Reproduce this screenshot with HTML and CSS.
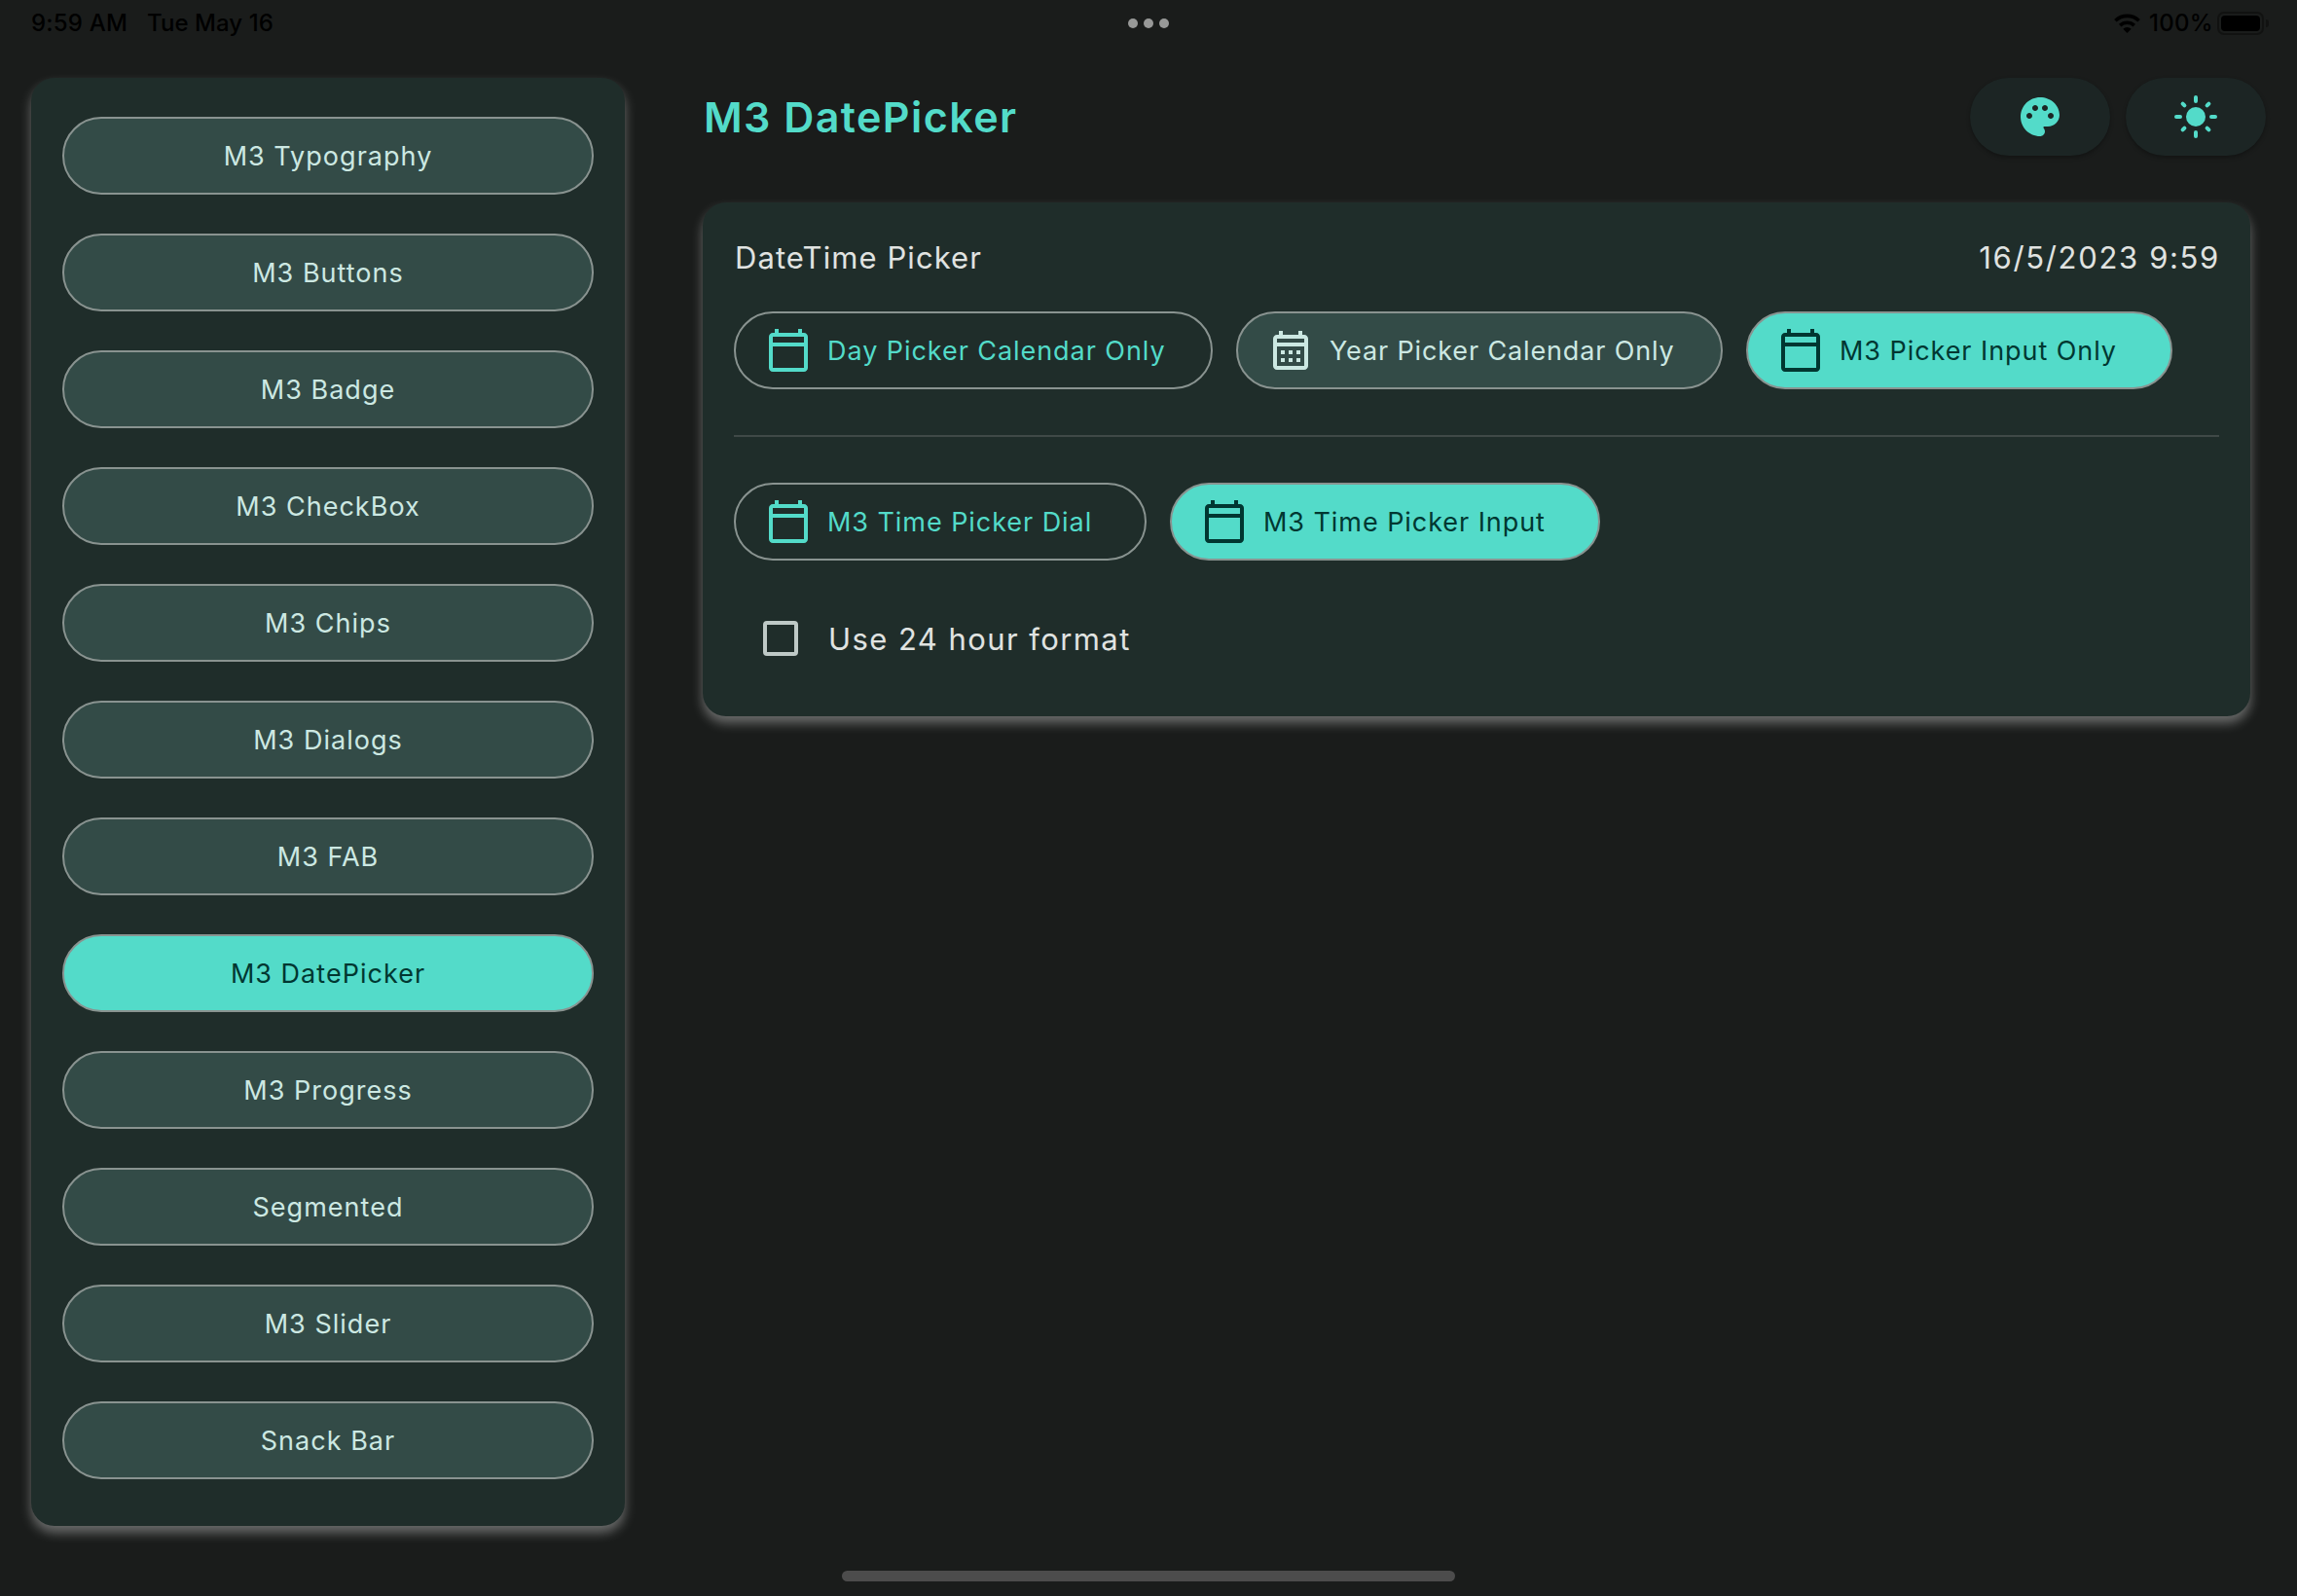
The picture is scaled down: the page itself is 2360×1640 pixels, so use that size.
FILE: index.html
```html
<!DOCTYPE html>
<html lang="en">
<head>
<meta charset="utf-8">
<title>M3 DatePicker</title>
<link rel="stylesheet" href="styles.css">
</head>
<body>
<svg class="defs" aria-hidden="true">
  <symbol id="calendar" viewBox="0 0 24 24"><path d="M20 3h-1V1h-2v2H7V1H5v2H4c-1.1 0-2 .9-2 2v16c0 1.1.9 2 2 2h16c1.1 0 2-.9 2-2V5c0-1.1-.9-2-2-2zm0 18H4V10h16v11zm0-13H4V5h16v3z"/></symbol>
  <symbol id="calendar-month" viewBox="0 0 24 24"><path d="M19 4h-1V2h-2v2H8V2H6v2H5c-1.11 0-1.99.9-1.99 2L3 20c0 1.1.89 2 2 2h14c1.1 0 2-.9 2-2V6c0-1.1-.9-2-2-2zm0 16H5V10h14v10zm0-12H5V6h14v2zm-10 6H7v-2h2v2zm4 0h-2v-2h2v2zm4 0h-2v-2h2v2zm-8 4H7v-2h2v2zm4 0h-2v-2h2v2zm4 0h-2v-2h2v2z"/></symbol>
</svg>
<div class="screen">
  <header class="status-bar">
    <div class="status-left"><span class="clock">9:59 AM</span><span class="date">Tue May 16</span></div>
    <div class="multitask"><i></i><i></i><i></i></div>
    <div class="status-right">
      <svg class="wifi" viewBox="0 0 27 20"><g fill="none" stroke="currentColor" stroke-width="3.6"><path d="M1.4 7.3a17.4 17.4 0 0 1 24.2 0"/><path d="M6.2 12.1a10.6 10.6 0 0 1 14.6 0"/></g><path d="M13.5 20 9.3 15.7a6.1 6.1 0 0 1 8.4 0z" fill="currentColor"/></svg>
      <span class="percent">100%</span>
      <span class="battery"><i class="cell"><i class="charge"></i></i><i class="nub"></i></span>
    </div>
  </header>

  <div class="content">
    <nav class="sidebar">
      <button class="pill">M3 Typography</button>
      <button class="pill">M3 Buttons</button>
      <button class="pill">M3 Badge</button>
      <button class="pill">M3 CheckBox</button>
      <button class="pill">M3 Chips</button>
      <button class="pill">M3 Dialogs</button>
      <button class="pill">M3 FAB</button>
      <button class="pill active">M3 DatePicker</button>
      <button class="pill">M3 Progress</button>
      <button class="pill">Segmented</button>
      <button class="pill">M3 Slider</button>
      <button class="pill">Snack Bar</button>
    </nav>

    <main class="page">
      <div class="page-header">
        <h1>M3 DatePicker</h1>
        <div class="actions">
          <button class="action" aria-label="Palette"><svg class="icon" viewBox="0 0 24 24"><path d="M12 2C6.49 2 2 6.49 2 12s4.49 10 10 10c1.38 0 2.5-1.12 2.5-2.5 0-.61-.23-1.2-.64-1.67-.08-.1-.13-.21-.13-.33 0-.28.22-.5.5-.5H16c3.31 0 6-2.69 6-6 0-4.96-4.49-9-10-9zm5.5 11c-.83 0-1.5-.67-1.5-1.5s.67-1.5 1.5-1.5 1.5.67 1.5 1.5-.67 1.5-1.5 1.5zm-3-4c-.83 0-1.5-.67-1.5-1.5S13.67 6 14.5 6s1.5.67 1.5 1.5S15.33 9 14.5 9zM5 11.5c0-.83.67-1.5 1.5-1.5s1.5.67 1.5 1.5S7.33 13 6.5 13 5 12.33 5 11.5zm6-4c0 .83-.67 1.5-1.5 1.5S8 8.33 8 7.5 8.67 6 9.5 6s1.5.67 1.5 1.5z"/></svg></button>
          <button class="action" aria-label="Light mode"><svg class="icon" viewBox="0 0 24 24"><circle cx="12" cy="12" r="5"/><path fill="none" stroke="currentColor" stroke-width="2" stroke-linecap="round" d="M12 2v2M12 20v2M2 12h2M20 12h2M5.3 5.3l.9.9M17.8 17.8l.9.9M5.3 18.7l.9-.9M17.8 6.2l.9-.9"/></svg></button>
        </div>
      </div>

      <section class="card">
        <div class="card-header"><h2>DateTime Picker</h2><span class="timestamp">16/5/2023 9:59</span></div>
        <div class="row">
          <button class="pill with-icon outlined w-day"><svg class="icon"><use href="#calendar"/></svg>Day Picker Calendar Only</button>
          <button class="pill with-icon w-year"><svg class="icon"><use href="#calendar-month"/></svg>Year Picker Calendar Only</button>
          <button class="pill with-icon active w-input"><svg class="icon"><use href="#calendar"/></svg>M3 Picker Input Only</button>
        </div>
        <hr class="divider">
        <div class="row">
          <button class="pill with-icon outlined w-dial"><svg class="icon"><use href="#calendar"/></svg>M3 Time Picker Dial</button>
          <button class="pill with-icon active w-time"><svg class="icon"><use href="#calendar"/></svg>M3 Time Picker Input</button>
        </div>
        <label class="check"><span class="box"></span>Use 24 hour format</label>
      </section>
    </main>
  </div>
  <footer class="home"><i class="home-bar"></i></footer>
</div>
</body>
</html>
```
FILE: styles.css
```css
* { box-sizing: border-box; }

:root {
  --background: #1a1c1b;
  --card: #1f2d2a;
  --raised: #1c2524;
  --primary: #53dbc9;
  --on-primary: #003731;
  --secondary: #334b47;
  --on-secondary: #cce8e2;
  --outline: #899390;
  --text: #e0e3e1;
}

body {
  margin: 0;
  background: var(--background);
  color: var(--text);
  font-family: Inter, "Liberation Sans", sans-serif;
}

h1, h2 { margin: 0; }
.defs { display: none; }

.screen {
  width: 2360px;
  height: 1640px;
  display: flex;
  flex-direction: column;
  overflow: hidden;
}

/* Status bar */
.status-bar {
  height: 48px;
  flex: none;
  display: grid;
  grid-template-columns: 1159px auto 1fr;
  align-items: center;
  padding-right: 29px;
  color: #000;
  font-size: 24px;
  font-weight: 500;
  line-height: 48px;
}
.status-left { display: flex; gap: 20px; padding-left: 32px; }
.clock { letter-spacing: .2px; }
.date { letter-spacing: .05px; }
.multitask { display: flex; gap: 6px; }
.multitask i { width: 10px; height: 10px; border-radius: 50%; background: #989998; }
.status-right { display: flex; align-items: center; justify-content: flex-end; }
.wifi { width: 27px; height: 20px; margin-right: 9px; }
.percent { letter-spacing: .3px; margin-right: 4px; }
.battery { display: flex; align-items: center; gap: 2px; }
.cell { width: 48px; height: 24px; padding: 2px; border: 2px solid #111211; border-radius: 7px; }
.charge { display: block; height: 16px; border-radius: 4px; background: #000; }
.nub { width: 3px; height: 8px; border-radius: 0 3px 3px 0; background: #111211; }

/* Two column body */
.content {
  flex: 1;
  display: flex;
  align-items: flex-start;
  gap: 80px;
  padding: 32px 32px 0;
}

.sidebar, .card {
  background: var(--card);
  border-radius: 24px;
  box-shadow: 0 7px 12px rgba(255, 255, 255, .35);
}

.sidebar {
  width: 610px;
  height: 1488px;
  flex: none;
  display: flex;
  flex-direction: column;
  gap: 40px;
  padding: 40px 32px 48px;
}

.pill {
  height: 80px;
  flex: none;
  display: flex;
  align-items: center;
  justify-content: center;
  padding: 0;
  border: 2px solid var(--outline);
  border-radius: 40px;
  background: var(--secondary);
  color: var(--on-secondary);
  font: 400 27px Inter, "Liberation Sans", sans-serif;
  letter-spacing: 1.02px;
  white-space: nowrap;
}
.pill.active { background: var(--primary); color: var(--on-primary); }
.pill.outlined { background: transparent; color: var(--primary); }
.pill.with-icon { justify-content: flex-start; gap: 16px; padding-left: 30px; letter-spacing: .94px; }

.icon { width: 48px; height: 48px; flex: none; fill: currentColor; }

.page { flex: 1; min-width: 0; }

.page-header {
  height: 80px;
  display: flex;
  align-items: center;
  justify-content: space-between;
  margin-bottom: 48px;
}
h1 { padding-left: 1px; color: var(--primary); font-size: 43px; font-weight: 600; letter-spacing: 1.44px; }
.actions { display: flex; gap: 16px; }
.action {
  width: 144px;
  height: 80px;
  display: flex;
  align-items: center;
  justify-content: center;
  padding: 0;
  border: 0;
  border-radius: 40px;
  background: var(--raised);
  color: var(--primary);
  box-shadow: 0 2px 4px rgba(0, 0, 0, .3);
}

.card { width: 1590px; height: 528px; padding: 31px 32px 32px; }
.card-header {
  height: 50px;
  display: flex;
  align-items: center;
  justify-content: space-between;
  margin-bottom: 31px;
}
h2 { padding-left: 1px; font-size: 31px; font-weight: 400; letter-spacing: 1.08px; }
.timestamp { margin-right: -1px; font-size: 31px; letter-spacing: 1.66px; }

.row { display: flex; gap: 24px; }
.w-day { width: 492px; }
.pill.w-year { width: 500px; letter-spacing: .86px; }
.w-input { width: 438px; }
.w-dial { width: 424px; }
.w-time { width: 442px; }

.divider { height: 2px; margin: 47px 0; border: 0; background: #3f4947; }

.check {
  display: flex;
  align-items: center;
  gap: 31px;
  height: 48px;
  margin: 56px 0 0 30px;
  font-size: 31px;
  letter-spacing: 1.43px;
}
.box { width: 36px; height: 36px; border: 4px solid #bec9c6; border-radius: 4px; }

/* Home indicator */
.home { height: 26px; flex: none; display: flex; justify-content: center; }
.home-bar { width: 630px; height: 11px; border-radius: 6px; background: #4c4c4c; }
```
